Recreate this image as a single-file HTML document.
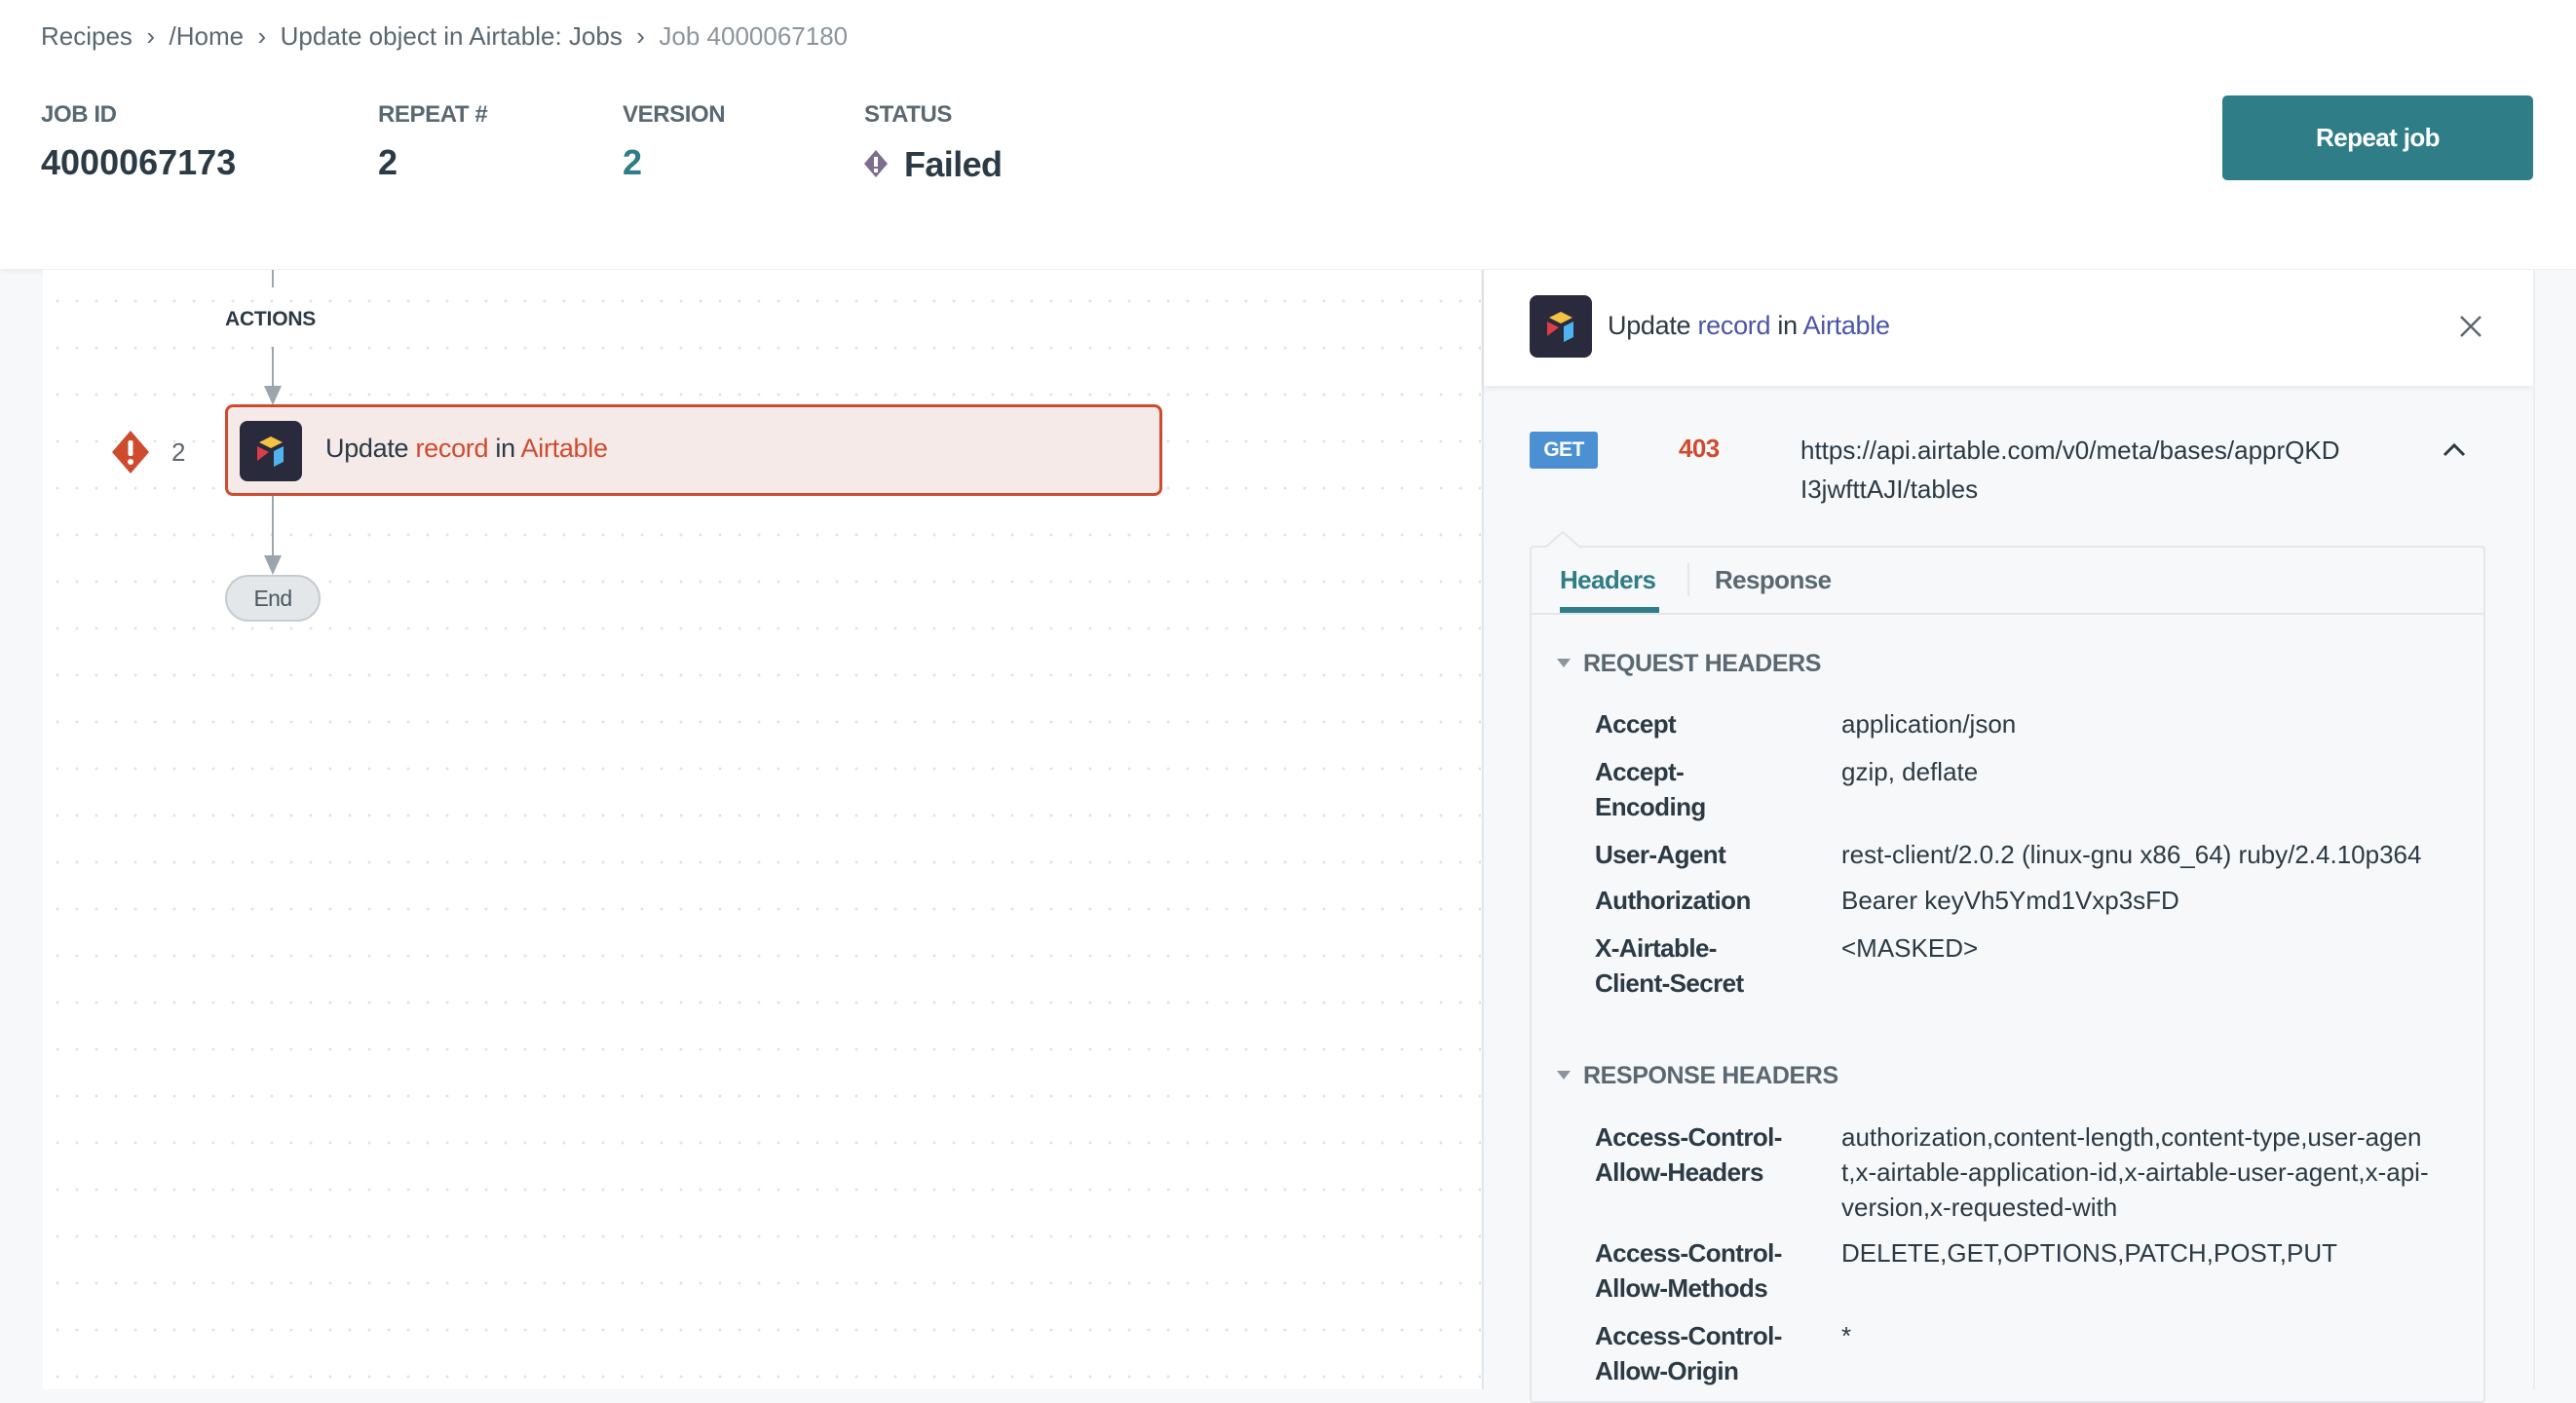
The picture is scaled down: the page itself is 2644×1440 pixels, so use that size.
<!DOCTYPE html>
<html><head><meta charset="utf-8"><style>
*{margin:0;padding:0;box-sizing:border-box}
body{width:2644px;height:1426px;overflow:hidden;background:#f7f8fa;font-family:"Liberation Sans",sans-serif;color:#2b3a44;position:relative;letter-spacing:-0.6px}
.a{position:absolute;white-space:nowrap;line-height:36px}
#top{position:absolute;left:0;top:0;width:2644px;height:276px;background:#fff;box-shadow:0 2px 6px rgba(0,0,0,.06)}
.bc{top:19px;font-size:26px;color:#5a6872;letter-spacing:0}
.lbl{top:100px;font-size:24px;font-weight:bold;color:#5a6872;letter-spacing:-0.4px}
.val{top:146px;font-size:36px;font-weight:bold;color:#2b3a44;line-height:42px}
#canvas{position:absolute;left:44px;top:277px;width:1476px;height:1149px;background-color:#fff;background-image:radial-gradient(circle,#dfe3e7 1.3px,transparent 1.6px);background-size:20px 48px;background-position:5px 8px}
#rp{position:absolute;left:1521px;top:277px;width:1079px;height:1149px;background:#f7f8fa;border-left:2px solid #e3e6ea}
.k{font-size:26px;font-weight:bold;color:#2b3a44}
.v{font-size:26px;color:#2b3a44;letter-spacing:0}
</style></head><body>
<div id="top"></div>
<div class="a bc" style="left:42px">Recipes&nbsp;&nbsp;›&nbsp;&nbsp;/Home&nbsp;&nbsp;›&nbsp;&nbsp;Update object in Airtable: Jobs&nbsp;&nbsp;›&nbsp;&nbsp;<span style="color:#8a959d">Job 4000067180</span></div>
<div class="a lbl" style="left:42px">JOB ID</div>
<div class="a lbl" style="left:388px">REPEAT #</div>
<div class="a lbl" style="left:639px">VERSION</div>
<div class="a lbl" style="left:887px">STATUS</div>
<div class="a val" style="left:42px;letter-spacing:0">4000067173</div>
<div class="a val" style="left:388px">2</div>
<div class="a val" style="left:639px;color:#2f7d87">2</div>
<svg style="position:absolute;left:885px;top:153px" width="28" height="30" viewBox="0 0 28 30"><path d="M14 1 L26 15 L14 29 L2 15Z" fill="#7d6e8c"/><rect x="12" y="8" width="4" height="10" fill="#fff"/><rect x="12" y="20" width="4" height="4" fill="#fff"/></svg>
<div class="a val" style="left:928px;top:148px">Failed</div>
<div style="position:absolute;left:2281px;top:98px;width:319px;height:87px;background:#2f7d87;border-radius:5px;color:#fff;font-weight:bold;font-size:26px;line-height:87px;text-align:center">Repeat job</div>

<div id="canvas"></div>
<div style="position:absolute;left:279px;top:277px;width:2px;height:18px;background:#9aa5ad"></div>
<div class="a" style="left:231px;top:310px;font-size:21px;font-weight:bold;letter-spacing:-0.2px">ACTIONS</div>
<div style="position:absolute;left:279px;top:356px;width:2px;height:44px;background:#9aa5ad"></div>
<svg style="position:absolute;left:271px;top:396px" width="18" height="20"><path d="M0 0 L18 0 L9 20Z" fill="#9aa5ad"/></svg>
<div style="position:absolute;left:231px;top:415px;width:962px;height:94px;background:#f6eae8;border:3px solid #cf4b2e;border-radius:8px"></div>
<svg style="position:absolute;left:246px;top:432px" width="64" height="62" viewBox="0 0 64 62"><rect width="64" height="62" rx="8" fill="#292a3c"/><path d="M32 16 L44 22 L32 28 L20 22Z" fill="#f5c242"/><path d="M35 31 L45 26 L45 42 L35 47Z" fill="#4fb3f0"/><path d="M18 26 L30 32 L18 41Z" fill="#dc3d48"/></svg>
<div class="a" style="left:334px;top:442px;font-size:27px;letter-spacing:-0.3px">Update <span style="color:#cf4b2e">record</span> in <span style="color:#cf4b2e">Airtable</span></div>
<svg style="position:absolute;left:114px;top:441px" width="40" height="46" viewBox="0 0 40 46"><path d="M20 1 L39 23 L20 45 L1 23Z" fill="#cf4b2e"/><rect x="17.5" y="11" width="5" height="16" rx="2" fill="#fff"/><circle cx="20" cy="33" r="3" fill="#fff"/></svg>
<div class="a" style="left:176px;top:446px;font-size:26px;color:#5a6872">2</div>
<div style="position:absolute;left:279px;top:509px;width:2px;height:64px;background:#9aa5ad"></div>
<svg style="position:absolute;left:271px;top:570px" width="18" height="20"><path d="M0 0 L18 0 L9 20Z" fill="#9aa5ad"/></svg>
<div style="position:absolute;left:231px;top:590px;width:98px;height:48px;background:#e3e7ea;border:2px solid #c5ccd1;border-radius:24px;text-align:center;line-height:44px;font-size:23px;color:#4a5862">End</div>

<div id="rp"></div>
<div style="position:absolute;left:1523px;top:277px;width:1077px;height:119px;background:#fff;box-shadow:0 3px 6px rgba(0,0,0,.06)"></div>
<div style="position:absolute;left:2600px;top:277px;width:44px;height:1149px;background:#f7f8fa;border-left:2px solid #eceef1"></div>
<svg style="position:absolute;left:1570px;top:303px" width="64" height="64" viewBox="0 0 64 64"><rect width="64" height="64" rx="8" fill="#292a3c"/><path d="M32 17 L44 23 L32 29 L20 23Z" fill="#f5c242"/><path d="M35 32 L45 27 L45 43 L35 48Z" fill="#4fb3f0"/><path d="M18 27 L30 33 L18 42Z" fill="#dc3d48"/></svg>
<div class="a" style="left:1650px;top:316px;font-size:27px;letter-spacing:-0.3px">Update <span style="color:#4a54a8">record</span> in <span style="color:#4a54a8">Airtable</span></div>
<svg style="position:absolute;left:2524px;top:323px" width="24" height="24"><path d="M2 2 L22 22 M22 2 L2 22" stroke="#5a6872" stroke-width="2.5"/></svg>
<div style="position:absolute;left:1570px;top:443px;width:70px;height:38px;background:#4a90d2;border-radius:3px;color:#fff;font-weight:bold;font-size:21px;line-height:38px;text-align:center">GET</div>
<div class="a" style="left:1723px;top:442px;font-size:26px;font-weight:bold;color:#cf4b2e">403</div>
<div class="a v" style="left:1848px;top:442px;line-height:40px">https://api.airtable.com/v0/meta/bases/apprQKD<br>I3jwfttAJI/tables</div>
<svg style="position:absolute;left:2507px;top:453px" width="24" height="16"><path d="M2 14 L12 4 L22 14" stroke="#2b3a44" stroke-width="3" fill="none"/></svg>
<div style="position:absolute;left:1570px;top:560px;width:981px;height:880px;border:2px solid #e3e6ea;border-radius:4px;background:#f7f8fa"></div>
<svg style="position:absolute;left:1586px;top:545px" width="36" height="18"><path d="M0 17 L18 1 L36 17" stroke="#e3e6ea" stroke-width="2" fill="#f7f8fa"/></svg>
<div style="position:absolute;left:1572px;top:629px;width:977px;height:2px;background:#e3e6ea"></div>
<div class="a" style="left:1601px;top:577px;font-size:26px;font-weight:bold;color:#2f7d87">Headers</div>
<div style="position:absolute;left:1601px;top:623px;width:102px;height:6px;background:#2f7d87"></div>
<div style="position:absolute;left:1732px;top:578px;width:2px;height:34px;background:#e3e6ea"></div>
<div class="a" style="left:1760px;top:577px;font-size:26px;font-weight:bold;color:#5a6872">Response</div>
<svg style="position:absolute;left:1598px;top:676px" width="14" height="10"><path d="M0 0 L14 0 L7 9Z" fill="#8a959d"/></svg>
<div class="a" style="left:1625px;top:663px;font-size:25px;font-weight:bold;color:#5a6872;letter-spacing:-0.4px">REQUEST HEADERS</div>
<div class="a k" style="left:1637px;top:725px">Accept</div><div class="a v" style="left:1890px;top:725px">application/json</div>
<div class="a k" style="left:1637px;top:774px">Accept-<br>Encoding</div><div class="a v" style="left:1890px;top:774px">gzip, deflate</div>
<div class="a k" style="left:1637px;top:859px">User-Agent</div><div class="a v" style="left:1890px;top:859px">rest-client/2.0.2 (linux-gnu x86_64) ruby/2.4.10p364</div>
<div class="a k" style="left:1637px;top:906px">Authorization</div><div class="a v" style="left:1890px;top:906px">Bearer keyVh5Ymd1Vxp3sFD</div>
<div class="a k" style="left:1637px;top:955px">X-Airtable-<br>Client-Secret</div><div class="a v" style="left:1890px;top:955px">&lt;MASKED&gt;</div>
<svg style="position:absolute;left:1598px;top:1099px" width="14" height="10"><path d="M0 0 L14 0 L7 9Z" fill="#8a959d"/></svg>
<div class="a" style="left:1625px;top:1086px;font-size:25px;font-weight:bold;color:#5a6872;letter-spacing:-0.4px">RESPONSE HEADERS</div>
<div class="a k" style="left:1637px;top:1149px">Access-Control-<br>Allow-Headers</div><div class="a v" style="left:1890px;top:1149px">authorization,content-length,content-type,user-agen<br>t,x-airtable-application-id,x-airtable-user-agent,x-api-<br>version,x-requested-with</div>
<div class="a k" style="left:1637px;top:1268px">Access-Control-<br>Allow-Methods</div><div class="a v" style="left:1890px;top:1268px">DELETE,GET,OPTIONS,PATCH,POST,PUT</div>
<div class="a k" style="left:1637px;top:1353px">Access-Control-<br>Allow-Origin</div><div class="a v" style="left:1890px;top:1353px">*</div>
</body></html>
